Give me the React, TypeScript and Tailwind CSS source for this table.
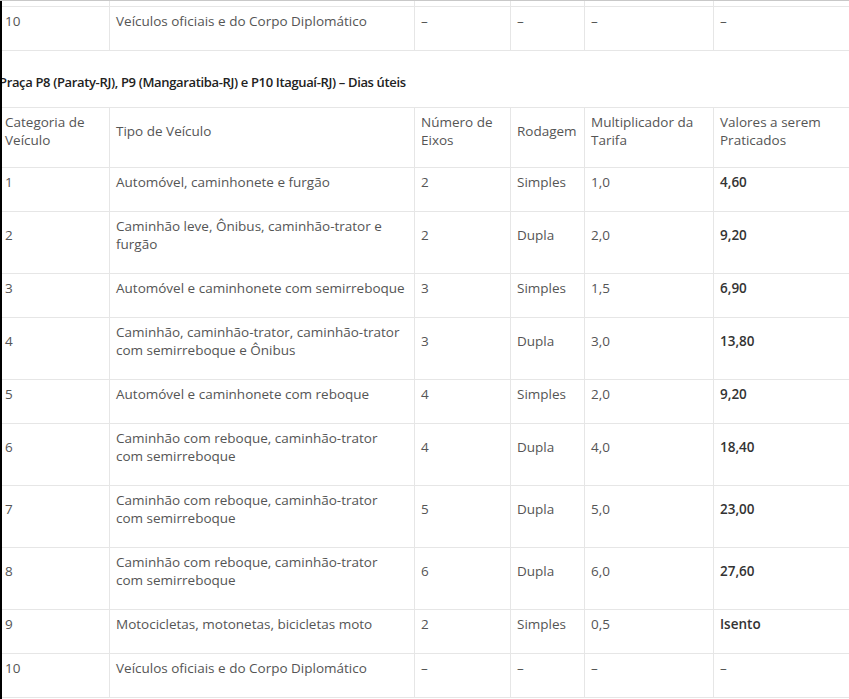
import React from 'react'

type Row = {
  cat: string
  tipo: string
  eixos: string
  rodagem: string
  mult: string
  valor: string
}

const rows: Row[] = [
  { cat: '1', tipo: 'Automóvel, caminhonete e furgão', eixos: '2', rodagem: 'Simples', mult: '1,0', valor: '4,60' },
  { cat: '2', tipo: 'Caminhão leve, Ônibus, caminhão-trator e furgão', eixos: '2', rodagem: 'Dupla', mult: '2,0', valor: '9,20' },
  { cat: '3', tipo: 'Automóvel e caminhonete com semirreboque', eixos: '3', rodagem: 'Simples', mult: '1,5', valor: '6,90' },
  { cat: '4', tipo: 'Caminhão, caminhão-trator, caminhão-trator com semirreboque e Ônibus', eixos: '3', rodagem: 'Dupla', mult: '3,0', valor: '13,80' },
  { cat: '5', tipo: 'Automóvel e caminhonete com reboque', eixos: '4', rodagem: 'Simples', mult: '2,0', valor: '9,20' },
  { cat: '6', tipo: 'Caminhão com reboque, caminhão-trator com semirreboque', eixos: '4', rodagem: 'Dupla', mult: '4,0', valor: '18,40' },
  { cat: '7', tipo: 'Caminhão com reboque, caminhão-trator com semirreboque', eixos: '5', rodagem: 'Dupla', mult: '5,0', valor: '23,00' },
  { cat: '8', tipo: 'Caminhão com reboque, caminhão-trator com semirreboque', eixos: '6', rodagem: 'Dupla', mult: '6,0', valor: '27,60' },
  { cat: '9', tipo: 'Motocicletas, motonetas, bicicletas moto', eixos: '2', rodagem: 'Simples', mult: '0,5', valor: 'Isento' },
  { cat: '10', tipo: 'Veículos oficiais e do Corpo Diplomático', eixos: '–', rodagem: '–', mult: '–', valor: '–' },
]

const cell = 'border border-[#e6e6e6] px-[6px] pt-[5px] align-middle text-left font-normal'
const td = `${cell} pb-[20px]`
const th = `${cell} pb-[18px]`

function Cols() {
  return (
    <colgroup>
      <col className="w-[111px]" />
      <col className="w-[305px]" />
      <col className="w-[96px]" />
      <col className="w-[74px]" />
      <col className="w-[129px]" />
      <col className="w-[136px]" />
    </colgroup>
  )
}

function BodyRow({ row }: { row: Row }) {
  return (
    <tr>
      <td className={td}>{row.cat}</td>
      <td className={td}>{row.tipo}</td>
      <td className={td}>{row.eixos}</td>
      <td className={td}>{row.rodagem}</td>
      <td className={td}>{row.mult}</td>
      <td className={`${td} ${row.valor === '–' ? '' : 'font-semibold text-[#333]'}`}>{row.valor}</td>
    </tr>
  )
}

export default function App() {
  return (
    <div className="relative h-[699px] overflow-hidden bg-white border-t border-[#c8c8c8] font-['Open_Sans',sans-serif] text-[13.5px] leading-[18px] text-[#555]">
      {/* faixa escura na borda esquerda */}
      <div className="absolute left-0 top-0 bottom-0 w-[2px] bg-black z-10" />

      <div className="-ml-[2px] w-[851px]">
        {/* fim da tabela anterior */}
        <table className="table-fixed border-collapse w-[851px]">
          <Cols />
          <tbody>
            <tr className="h-[5px]">
              <td className="border-x border-[#e6e6e6] p-0" />
              <td className="border-x border-[#e6e6e6] p-0" />
              <td className="border-x border-[#e6e6e6] p-0" />
              <td className="border-x border-[#e6e6e6] p-0" />
              <td className="border-x border-[#e6e6e6] p-0" />
              <td className="border-x border-[#e6e6e6] p-0" />
            </tr>
            <tr>
              <td className={`${td} pt-[3px]`}>10</td>
              <td className={`${td} pt-[3px]`}>Veículos oficiais e do Corpo Diplomático</td>
              <td className={`${td} pt-[3px]`}>–</td>
              <td className={`${td} pt-[3px]`}>–</td>
              <td className={`${td} pt-[3px]`}>–</td>
              <td className={`${td} pt-[3px]`}>–</td>
            </tr>
          </tbody>
        </table>

        <h3 className="mt-[22px] mb-[16px] pl-[1px] text-[13px] font-semibold tracking-[-0.35px] text-[#222] leading-[18px]">
          Praça P8 (Paraty-RJ), P9 (Mangaratiba-RJ) e P10 Itaguaí-RJ) – Dias úteis
        </h3>

        <table className="table-fixed border-collapse w-[851px]">
          <Cols />
          <thead>
            <tr>
              <th className={th}>Categoria de Veículo</th>
              <th className={th}>Tipo de Veículo</th>
              <th className={th}>Número de Eixos</th>
              <th className={th}>Rodagem</th>
              <th className={th}>Multiplicador da Tarifa</th>
              <th className={th}>Valores a serem Praticados</th>
            </tr>
          </thead>
          <tbody>
            {rows.map((r) => (
              <BodyRow key={r.cat} row={r} />
            ))}
          </tbody>
        </table>
      </div>
    </div>
  )
}
